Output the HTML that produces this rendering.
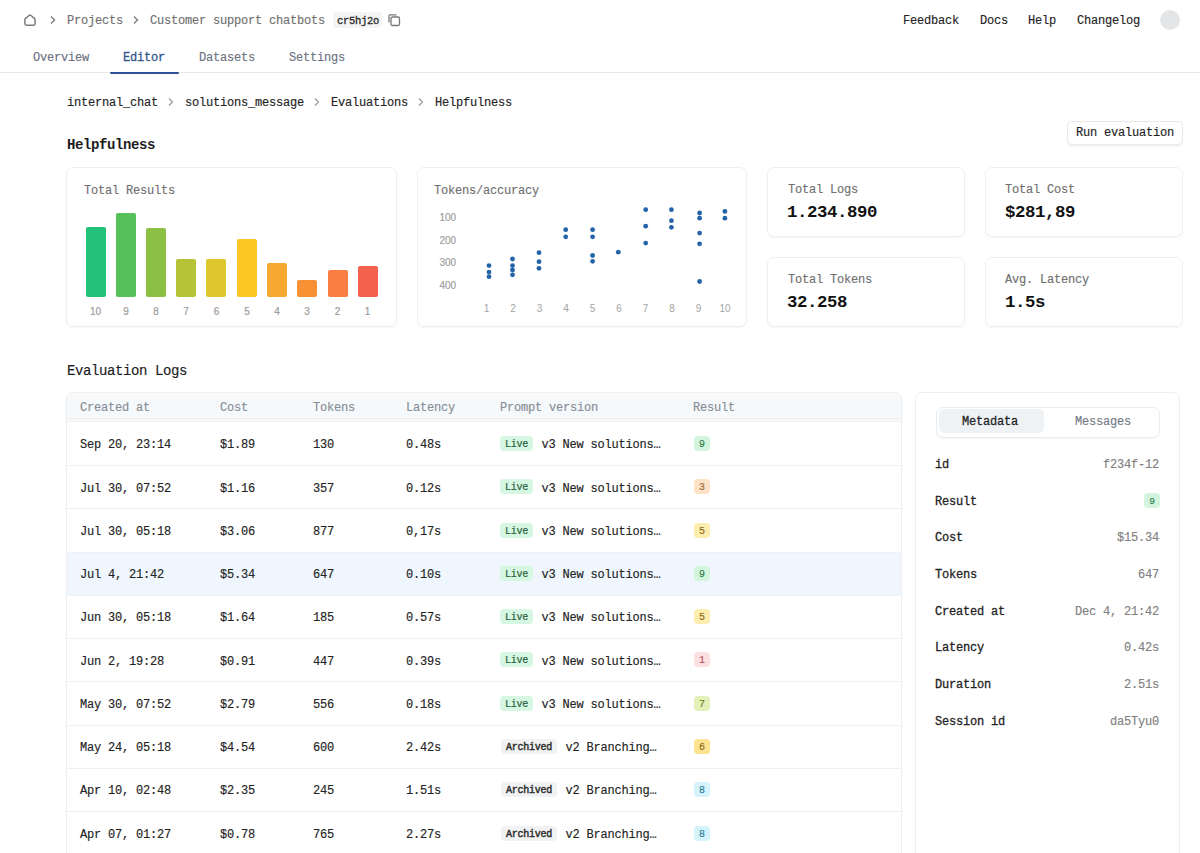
<!DOCTYPE html>
<html><head><meta charset="utf-8">
<style>
*{margin:0;padding:0;box-sizing:border-box}
html,body{width:1200px;height:853px;overflow:hidden;background:#fff}
body{font-family:"Liberation Mono",monospace;font-size:12px;letter-spacing:-0.2px;line-height:14px;color:#232323;position:relative;-webkit-text-stroke:0.15px currentColor}
.a{position:absolute;white-space:nowrap}
.g{color:#707070}
.sans{font-family:"Liberation Sans",sans-serif;letter-spacing:0;-webkit-text-stroke:0.2px currentColor}
.card{position:absolute;border:1px solid #efefef;border-radius:7px;background:#fff;box-shadow:0 1px 2px rgba(0,0,0,0.04)}
.b{font-weight:bold}
.sb{-webkit-text-stroke:0.28px currentColor}
.bd{height:15px;border-radius:4px;font-size:10px;letter-spacing:-0.24px;line-height:18px;text-align:center;-webkit-text-stroke:0.2px currentColor}
</style></head><body>
<!-- top bar -->
<svg class="a" style="left:23px;top:13px" width="14" height="14" viewBox="0 0 14 14"><path d="M1.9 6.9Q1.9 6 2.6 5.4L6 2.5Q7 1.7 8 2.5L11.4 5.4Q12.1 6 12.1 6.9V10.6Q12.1 12.2 10.5 12.2H3.5Q1.9 12.2 1.9 10.6Z" fill="none" stroke="#7a7a7a" stroke-width="1.5" stroke-linejoin="round"/></svg>
<svg class="a" style="left:49px;top:15px" width="8" height="10" viewBox="0 0 8 10"><path d="M2 1.5L5.5 5L2 8.5" fill="none" stroke="#7a7a7a" stroke-width="1.3"/></svg>
<div class="a g" style="left:67px;top:14px">Projects</div>
<svg class="a" style="left:132px;top:15px" width="8" height="10" viewBox="0 0 8 10"><path d="M2 1.5L5.5 5L2 8.5" fill="none" stroke="#7a7a7a" stroke-width="1.3"/></svg>
<div class="a g" style="left:150px;top:14px">Customer support chatbots</div>
<div class="a" style="left:333px;top:12px;width:49px;height:16px;background:#f4f4f4;border-radius:4px"></div>
<div class="a" style="left:337px;top:14px;font-size:10.5px;letter-spacing:-0.3px;color:#2a2a2a;-webkit-text-stroke:0.3px currentColor">cr5hj2o</div>
<svg class="a" style="left:387px;top:13px" width="14" height="14" viewBox="0 0 14 14"><rect x="4" y="4" width="8.5" height="8.5" rx="1.5" fill="none" stroke="#777" stroke-width="1.3"/><path d="M2 9.5V3a1.2 1.2 0 0 1 1.2-1.2H9.5" fill="none" stroke="#777" stroke-width="1.3"/></svg>

<div class="a" style="left:903px;top:14px">Feedback</div>
<div class="a" style="left:980px;top:14px">Docs</div>
<div class="a" style="left:1028px;top:14px">Help</div>
<div class="a" style="left:1077px;top:14px">Changelog</div>
<div class="a" style="left:1160px;top:10px;width:20px;height:20px;border-radius:50%;background:#e4e5e7"></div>

<!-- tabs -->
<div class="a" style="left:33px;top:50.5px;color:#6b7280">Overview</div>
<div class="a" style="left:123px;top:50.5px;color:#34588e;-webkit-text-stroke:0.3px currentColor">Editor</div>
<div class="a" style="left:199px;top:50.5px;color:#6b7280">Datasets</div>
<div class="a" style="left:289px;top:50.5px;color:#6b7280">Settings</div>
<div class="a" style="left:0;top:72px;width:1200px;height:1px;background:#e8e8e8"></div>
<div class="a" style="left:110px;top:71.5px;width:69px;height:2px;border-radius:1px;background:#2f5193"></div>

<!-- breadcrumb 2 -->
<div class="a" style="left:67px;top:95.7px">internal_chat</div>
<svg class="a" style="left:167px;top:96.5px" width="8" height="10" viewBox="0 0 8 10"><path d="M2 1.5L5.5 5L2 8.5" fill="none" stroke="#9a9a9a" stroke-width="1.2"/></svg>
<div class="a" style="left:185px;top:95.7px">solutions_message</div>
<svg class="a" style="left:313px;top:96.5px" width="8" height="10" viewBox="0 0 8 10"><path d="M2 1.5L5.5 5L2 8.5" fill="none" stroke="#9a9a9a" stroke-width="1.2"/></svg>
<div class="a" style="left:331px;top:95.7px">Evaluations</div>
<svg class="a" style="left:417px;top:96.5px" width="8" height="10" viewBox="0 0 8 10"><path d="M2 1.5L5.5 5L2 8.5" fill="none" stroke="#9a9a9a" stroke-width="1.2"/></svg>
<div class="a" style="left:435px;top:95.7px">Helpfulness</div>

<div class="a b" style="left:67px;top:137.5px;font-size:14px;letter-spacing:-0.4px;color:#1c1c1c;-webkit-text-stroke:0">Helpfulness</div>
<div class="a" style="left:1067px;top:121px;width:116px;height:24px;border:1px solid #e9e9e9;border-radius:5px;box-shadow:0 1.5px 1px rgba(0,0,0,0.05)"></div>
<div class="a" style="left:1076px;top:125.5px;color:#1e1e1e">Run evaluation</div>

<!-- cards -->
<div class="card" style="left:66px;top:167px;width:331px;height:160px"></div>
<div class="a g" style="left:84px;top:184px">Total Results</div>
<div class="card" style="left:417px;top:167px;width:330px;height:160px"></div>
<div class="a g" style="left:434px;top:184px">Tokens/accuracy</div>

<div class="card" style="left:767px;top:167px;width:198px;height:70px"></div>
<div class="a g" style="left:788px;top:182.5px">Total Logs</div>
<div class="a b" style="left:787px;top:202.5px;font-size:17.4px;letter-spacing:-0.44px;line-height:20px;color:#111;-webkit-text-stroke:0">1.234.890</div>
<div class="card" style="left:985px;top:167px;width:198px;height:70px"></div>
<div class="a g" style="left:1005px;top:182.5px">Total Cost</div>
<div class="a b" style="left:1005px;top:202.5px;font-size:17.4px;letter-spacing:-0.44px;line-height:20px;color:#111;-webkit-text-stroke:0">$281,89</div>
<div class="card" style="left:767px;top:257px;width:198px;height:70px"></div>
<div class="a g" style="left:788px;top:272.5px">Total Tokens</div>
<div class="a b" style="left:787px;top:292.5px;font-size:17.4px;letter-spacing:-0.44px;line-height:20px;color:#111;-webkit-text-stroke:0">32.258</div>
<div class="card" style="left:985px;top:257px;width:198px;height:70px"></div>
<div class="a g" style="left:1005px;top:272.5px">Avg. Latency</div>
<div class="a b" style="left:1005px;top:292.5px;font-size:17.4px;letter-spacing:-0.44px;line-height:20px;color:#111;-webkit-text-stroke:0">1.5s</div>

<!-- CHARTS -->
<div id="charts">
<div class="a" style="left:86px;top:227px;width:20px;height:70px;background:#22c27b;border-radius:2px"></div>
<div class="a" style="left:116px;top:213px;width:20px;height:84px;background:#56c158;border-radius:2px"></div>
<div class="a" style="left:146px;top:228px;width:20px;height:69px;background:#8cc044;border-radius:2px"></div>
<div class="a" style="left:176px;top:259px;width:20px;height:38px;background:#b7c336;border-radius:2px"></div>
<div class="a" style="left:206px;top:259px;width:20px;height:38px;background:#dec72d;border-radius:2px"></div>
<div class="a" style="left:237px;top:239px;width:20px;height:58px;background:#fcc625;border-radius:2px"></div>
<div class="a" style="left:267px;top:263px;width:20px;height:34px;background:#f8a931;border-radius:2px"></div>
<div class="a" style="left:297px;top:280px;width:20px;height:17px;background:#f89133;border-radius:2px"></div>
<div class="a" style="left:328px;top:270px;width:20px;height:27px;background:#f87e43;border-radius:2px"></div>
<div class="a" style="left:358px;top:266px;width:20px;height:31px;background:#f4614d;border-radius:2px"></div>
<div class="a sans" style="left:80.6px;top:304.5px;width:30px;text-align:center;font-size:10px;line-height:14px;color:#9c9c9c">10</div>
<div class="a sans" style="left:111.1px;top:304.5px;width:30px;text-align:center;font-size:10px;line-height:14px;color:#9c9c9c">9</div>
<div class="a sans" style="left:141.1px;top:304.5px;width:30px;text-align:center;font-size:10px;line-height:14px;color:#9c9c9c">8</div>
<div class="a sans" style="left:171.1px;top:304.5px;width:30px;text-align:center;font-size:10px;line-height:14px;color:#9c9c9c">7</div>
<div class="a sans" style="left:201.6px;top:304.5px;width:30px;text-align:center;font-size:10px;line-height:14px;color:#9c9c9c">6</div>
<div class="a sans" style="left:232.1px;top:304.5px;width:30px;text-align:center;font-size:10px;line-height:14px;color:#9c9c9c">5</div>
<div class="a sans" style="left:262.1px;top:304.5px;width:30px;text-align:center;font-size:10px;line-height:14px;color:#9c9c9c">4</div>
<div class="a sans" style="left:292.1px;top:304.5px;width:30px;text-align:center;font-size:10px;line-height:14px;color:#9c9c9c">3</div>
<div class="a sans" style="left:322.6px;top:304.5px;width:30px;text-align:center;font-size:10px;line-height:14px;color:#9c9c9c">2</div>
<div class="a sans" style="left:352.6px;top:304.5px;width:30px;text-align:center;font-size:10px;line-height:14px;color:#9c9c9c">1</div>
<div class="a sans" style="left:439.5px;top:210.8px;font-size:10px;line-height:14px;color:#a0a0a0">100</div>
<div class="a sans" style="left:439.5px;top:233.5px;font-size:10px;line-height:14px;color:#a0a0a0">200</div>
<div class="a sans" style="left:439.5px;top:256.1px;font-size:10px;line-height:14px;color:#a0a0a0">300</div>
<div class="a sans" style="left:439.5px;top:279.1px;font-size:10px;line-height:14px;color:#a0a0a0">400</div>
<div class="a sans" style="left:471.5px;top:301.5px;width:30px;text-align:center;font-size:10px;line-height:14px;color:#a6a6a6;-webkit-text-stroke:0.05px currentColor">1</div>
<div class="a sans" style="left:498.0px;top:301.5px;width:30px;text-align:center;font-size:10px;line-height:14px;color:#a6a6a6;-webkit-text-stroke:0.05px currentColor">2</div>
<div class="a sans" style="left:524.5px;top:301.5px;width:30px;text-align:center;font-size:10px;line-height:14px;color:#a6a6a6;-webkit-text-stroke:0.05px currentColor">3</div>
<div class="a sans" style="left:551.0px;top:301.5px;width:30px;text-align:center;font-size:10px;line-height:14px;color:#a6a6a6;-webkit-text-stroke:0.05px currentColor">4</div>
<div class="a sans" style="left:577.5px;top:301.5px;width:30px;text-align:center;font-size:10px;line-height:14px;color:#a6a6a6;-webkit-text-stroke:0.05px currentColor">5</div>
<div class="a sans" style="left:604.0px;top:301.5px;width:30px;text-align:center;font-size:10px;line-height:14px;color:#a6a6a6;-webkit-text-stroke:0.05px currentColor">6</div>
<div class="a sans" style="left:630.5px;top:301.5px;width:30px;text-align:center;font-size:10px;line-height:14px;color:#a6a6a6;-webkit-text-stroke:0.05px currentColor">7</div>
<div class="a sans" style="left:657.0px;top:301.5px;width:30px;text-align:center;font-size:10px;line-height:14px;color:#a6a6a6;-webkit-text-stroke:0.05px currentColor">8</div>
<div class="a sans" style="left:683.5px;top:301.5px;width:30px;text-align:center;font-size:10px;line-height:14px;color:#a6a6a6;-webkit-text-stroke:0.05px currentColor">9</div>
<div class="a sans" style="left:710.0px;top:301.5px;width:30px;text-align:center;font-size:10px;line-height:14px;color:#a6a6a6;-webkit-text-stroke:0.05px currentColor">10</div>
<svg class="a" style="left:0;top:0" width="1200" height="853"><circle cx="489" cy="265.6" r="2.4" fill="#2563a9"/><circle cx="489" cy="272.1" r="2.4" fill="#2563a9"/><circle cx="489" cy="276.7" r="2.4" fill="#2563a9"/><circle cx="512.5" cy="259" r="2.4" fill="#2563a9"/><circle cx="512.5" cy="265.6" r="2.4" fill="#2563a9"/><circle cx="512.5" cy="270" r="2.4" fill="#2563a9"/><circle cx="512.5" cy="274.8" r="2.4" fill="#2563a9"/><circle cx="539" cy="252.7" r="2.4" fill="#2563a9"/><circle cx="539" cy="261.7" r="2.4" fill="#2563a9"/><circle cx="539" cy="268.3" r="2.4" fill="#2563a9"/><circle cx="565.7" cy="229.7" r="2.4" fill="#2563a9"/><circle cx="565.7" cy="236.8" r="2.4" fill="#2563a9"/><circle cx="592.6" cy="229.7" r="2.4" fill="#2563a9"/><circle cx="592.6" cy="236.8" r="2.4" fill="#2563a9"/><circle cx="592.6" cy="255.5" r="2.4" fill="#2563a9"/><circle cx="592.6" cy="261.3" r="2.4" fill="#2563a9"/><circle cx="618.3" cy="252.2" r="2.4" fill="#2563a9"/><circle cx="645.7" cy="209.7" r="2.4" fill="#2563a9"/><circle cx="645.7" cy="226.2" r="2.4" fill="#2563a9"/><circle cx="645.7" cy="243.1" r="2.4" fill="#2563a9"/><circle cx="671.4" cy="209.7" r="2.4" fill="#2563a9"/><circle cx="671.4" cy="220.7" r="2.4" fill="#2563a9"/><circle cx="671.4" cy="227.3" r="2.4" fill="#2563a9"/><circle cx="699.6" cy="213" r="2.4" fill="#2563a9"/><circle cx="699.6" cy="218.2" r="2.4" fill="#2563a9"/><circle cx="699.6" cy="233.1" r="2.4" fill="#2563a9"/><circle cx="699.6" cy="243.8" r="2.4" fill="#2563a9"/><circle cx="699.6" cy="281.5" r="2.4" fill="#2563a9"/><circle cx="724.9" cy="211.4" r="2.4" fill="#2563a9"/><circle cx="724.9" cy="218.2" r="2.4" fill="#2563a9"/></svg>
</div>

<!-- Eval logs -->
<div class="a" style="left:67px;top:363.5px;font-size:14px;letter-spacing:-0.4px;color:#1c1c1c">Evaluation Logs</div>
<div id="table">
<div class="a" style="left:66px;top:392px;width:836px;height:470px;border:1px solid #eeeeee;border-radius:7px;background:#fff"></div>
<div class="a" style="left:67px;top:393px;width:834px;height:6px;background:#f9f9f9;border-radius:6px 6px 0 0"></div>
<div class="a" style="left:67px;top:399px;width:834px;height:18px;background:#f6f9fc"></div>
<div class="a" style="left:67px;top:417px;width:834px;height:5px;background:#f8f8f8"></div>
<div class="a" style="left:67px;top:418px;width:834px;height:1px;background:#f1f1f1"></div>
<div class="a" style="left:67px;top:421px;width:834px;height:1px;background:#f2f2f2"></div>
<div class="a" style="left:80px;top:401px;color:#878d95">Created at</div>
<div class="a" style="left:220px;top:401px;color:#878d95">Cost</div>
<div class="a" style="left:313px;top:401px;color:#878d95">Tokens</div>
<div class="a" style="left:406px;top:401px;color:#878d95">Latency</div>
<div class="a" style="left:500px;top:401px;color:#878d95">Prompt version</div>
<div class="a" style="left:693px;top:401px;color:#878d95">Result</div>
<div class="a" style="left:80px;top:438.3px">Sep 20, 23:14</div>
<div class="a" style="left:220px;top:438.3px">$1.89</div>
<div class="a" style="left:313px;top:438.3px">130</div>
<div class="a" style="left:406px;top:438.3px">0.48s</div>
<div class="a bd" style="left:500px;top:436px;width:33px;background:#d6f7e1;color:#2b5f3e">Live</div>
<div class="a" style="left:541.5px;top:438.3px">v3 New solutions…</div>
<div class="a bd" style="left:694px;top:436px;width:16px;background:#d3f5de;color:#2f7a4c;-webkit-text-stroke:0.15px currentColor">9</div>
<div class="a" style="left:67px;top:465px;width:834px;height:1px;background:#f0f0f0"></div>
<div class="a" style="left:80px;top:481.6px">Jul 30, 07:52</div>
<div class="a" style="left:220px;top:481.6px">$1.16</div>
<div class="a" style="left:313px;top:481.6px">357</div>
<div class="a" style="left:406px;top:481.6px">0.12s</div>
<div class="a bd" style="left:500px;top:479px;width:33px;background:#d6f7e1;color:#2b5f3e">Live</div>
<div class="a" style="left:541.5px;top:481.6px">v3 New solutions…</div>
<div class="a bd" style="left:694px;top:479px;width:16px;background:#fde2c6;color:#9b6a3c;-webkit-text-stroke:0.15px currentColor">3</div>
<div class="a" style="left:67px;top:508px;width:834px;height:1px;background:#f0f0f0"></div>
<div class="a" style="left:80px;top:524.8px">Jul 30, 05:18</div>
<div class="a" style="left:220px;top:524.8px">$3.06</div>
<div class="a" style="left:313px;top:524.8px">877</div>
<div class="a" style="left:406px;top:524.8px">0,17s</div>
<div class="a bd" style="left:500px;top:523px;width:33px;background:#d6f7e1;color:#2b5f3e">Live</div>
<div class="a" style="left:541.5px;top:524.8px">v3 New solutions…</div>
<div class="a bd" style="left:694px;top:523px;width:16px;background:#fdeeb0;color:#8a6a1c;-webkit-text-stroke:0.15px currentColor">5</div>
<div class="a" style="left:67px;top:552px;width:834px;height:1px;background:#f0f0f0"></div>
<div class="a" style="left:67px;top:553px;width:834px;height:42px;background:#eff6fd"></div>
<div class="a" style="left:80px;top:568.1px">Jul 4, 21:42</div>
<div class="a" style="left:220px;top:568.1px">$5.34</div>
<div class="a" style="left:313px;top:568.1px">647</div>
<div class="a" style="left:406px;top:568.1px">0.10s</div>
<div class="a bd" style="left:500px;top:566px;width:33px;background:#d6f7e1;color:#2b5f3e">Live</div>
<div class="a" style="left:541.5px;top:568.1px">v3 New solutions…</div>
<div class="a bd" style="left:694px;top:566px;width:16px;background:#d3f5de;color:#2f7a4c;-webkit-text-stroke:0.15px currentColor">9</div>
<div class="a" style="left:67px;top:595px;width:834px;height:1px;background:#f0f0f0"></div>
<div class="a" style="left:80px;top:611.3px">Jun 30, 05:18</div>
<div class="a" style="left:220px;top:611.3px">$1.64</div>
<div class="a" style="left:313px;top:611.3px">185</div>
<div class="a" style="left:406px;top:611.3px">0.57s</div>
<div class="a bd" style="left:500px;top:609px;width:33px;background:#d6f7e1;color:#2b5f3e">Live</div>
<div class="a" style="left:541.5px;top:611.3px">v3 New solutions…</div>
<div class="a bd" style="left:694px;top:609px;width:16px;background:#fdeeb0;color:#8a6a1c;-webkit-text-stroke:0.15px currentColor">5</div>
<div class="a" style="left:67px;top:638px;width:834px;height:1px;background:#f0f0f0"></div>
<div class="a" style="left:80px;top:654.6px">Jun 2, 19:28</div>
<div class="a" style="left:220px;top:654.6px">$0.91</div>
<div class="a" style="left:313px;top:654.6px">447</div>
<div class="a" style="left:406px;top:654.6px">0.39s</div>
<div class="a bd" style="left:500px;top:652px;width:33px;background:#d6f7e1;color:#2b5f3e">Live</div>
<div class="a" style="left:541.5px;top:654.6px">v3 New solutions…</div>
<div class="a bd" style="left:694px;top:652px;width:16px;background:#fde0e2;color:#b8505a;-webkit-text-stroke:0.15px currentColor">1</div>
<div class="a" style="left:67px;top:681px;width:834px;height:1px;background:#f0f0f0"></div>
<div class="a" style="left:80px;top:697.9px">May 30, 07:52</div>
<div class="a" style="left:220px;top:697.9px">$2.79</div>
<div class="a" style="left:313px;top:697.9px">556</div>
<div class="a" style="left:406px;top:697.9px">0.18s</div>
<div class="a bd" style="left:500px;top:696px;width:33px;background:#d6f7e1;color:#2b5f3e">Live</div>
<div class="a" style="left:541.5px;top:697.9px">v3 New solutions…</div>
<div class="a bd" style="left:694px;top:696px;width:16px;background:#e3f1b8;color:#5f7a23;-webkit-text-stroke:0.15px currentColor">7</div>
<div class="a" style="left:67px;top:725px;width:834px;height:1px;background:#f0f0f0"></div>
<div class="a" style="left:80px;top:741.1px">May 24, 05:18</div>
<div class="a" style="left:220px;top:741.1px">$4.54</div>
<div class="a" style="left:313px;top:741.1px">600</div>
<div class="a" style="left:406px;top:741.1px">2.42s</div>
<div class="a bd" style="left:501px;top:739px;width:56px;background:#f1f2f4;color:#2e2e2e;-webkit-text-stroke:0.45px currentColor">Archived</div>
<div class="a" style="left:565.5px;top:741.1px">v2 Branching…</div>
<div class="a bd" style="left:694px;top:739px;width:16px;background:#fde38f;color:#8a6a1c;-webkit-text-stroke:0.15px currentColor">6</div>
<div class="a" style="left:67px;top:768px;width:834px;height:1px;background:#f0f0f0"></div>
<div class="a" style="left:80px;top:784.4px">Apr 10, 02:48</div>
<div class="a" style="left:220px;top:784.4px">$2.35</div>
<div class="a" style="left:313px;top:784.4px">245</div>
<div class="a" style="left:406px;top:784.4px">1.51s</div>
<div class="a bd" style="left:501px;top:782px;width:56px;background:#f1f2f4;color:#2e2e2e;-webkit-text-stroke:0.45px currentColor">Archived</div>
<div class="a" style="left:565.5px;top:784.4px">v2 Branching…</div>
<div class="a bd" style="left:694px;top:782px;width:16px;background:#d4f3fb;color:#2c7f96;-webkit-text-stroke:0.15px currentColor">8</div>
<div class="a" style="left:67px;top:811px;width:834px;height:1px;background:#f0f0f0"></div>
<div class="a" style="left:80px;top:827.6px">Apr 07, 01:27</div>
<div class="a" style="left:220px;top:827.6px">$0.78</div>
<div class="a" style="left:313px;top:827.6px">765</div>
<div class="a" style="left:406px;top:827.6px">2.27s</div>
<div class="a bd" style="left:501px;top:826px;width:56px;background:#f1f2f4;color:#2e2e2e;-webkit-text-stroke:0.45px currentColor">Archived</div>
<div class="a" style="left:565.5px;top:827.6px">v2 Branching…</div>
<div class="a bd" style="left:694px;top:826px;width:16px;background:#d4f3fb;color:#2c7f96;-webkit-text-stroke:0.15px currentColor">8</div>
</div>
<div id="meta">
<div class="a" style="left:915px;top:392px;width:265px;height:470px;border:1px solid #eeeeee;border-radius:7px;background:#fff"></div>
<div class="a" style="left:935.5px;top:406.5px;width:224px;height:31px;border:1px solid #ececec;border-radius:7px;background:#fff;box-shadow:0 1px 1px rgba(0,0,0,0.04)"></div>
<div class="a" style="left:938.5px;top:409px;width:105px;height:23.5px;border-radius:5px;background:#eff2f5"></div>
<div class="a sb" style="left:962px;top:414.5px;color:#222">Metadata</div>
<div class="a" style="left:1075px;top:414.5px;color:#737a84">Messages</div>
<div class="a sb" style="left:935px;top:457.9px;color:#222">id</div>
<div class="a" style="left:960px;top:457.9px;width:199px;text-align:right;color:#808080">f234f-12</div>
<div class="a sb" style="left:935px;top:494.6px;color:#222">Result</div>
<div class="a" style="left:1144px;top:492.7px;width:16px;height:15.5px;border-radius:4px;background:#d3f5de;color:#2f7a4c;font-size:9.6px;text-align:center;line-height:18px;-webkit-text-stroke:0.15px currentColor">9</div>
<div class="a sb" style="left:935px;top:531.2px;color:#222">Cost</div>
<div class="a" style="left:960px;top:531.2px;width:199px;text-align:right;color:#808080">$15.34</div>
<div class="a sb" style="left:935px;top:567.9px;color:#222">Tokens</div>
<div class="a" style="left:960px;top:567.9px;width:199px;text-align:right;color:#808080">647</div>
<div class="a sb" style="left:935px;top:604.6px;color:#222">Created at</div>
<div class="a" style="left:960px;top:604.6px;width:199px;text-align:right;color:#808080">Dec 4, 21:42</div>
<div class="a sb" style="left:935px;top:641.2px;color:#222">Latency</div>
<div class="a" style="left:960px;top:641.2px;width:199px;text-align:right;color:#808080">0.42s</div>
<div class="a sb" style="left:935px;top:677.9px;color:#222">Duration</div>
<div class="a" style="left:960px;top:677.9px;width:199px;text-align:right;color:#808080">2.51s</div>
<div class="a sb" style="left:935px;top:714.6px;color:#222">Session id</div>
<div class="a" style="left:960px;top:714.6px;width:199px;text-align:right;color:#808080">da5Tyu0</div>
</div>
</body></html>
